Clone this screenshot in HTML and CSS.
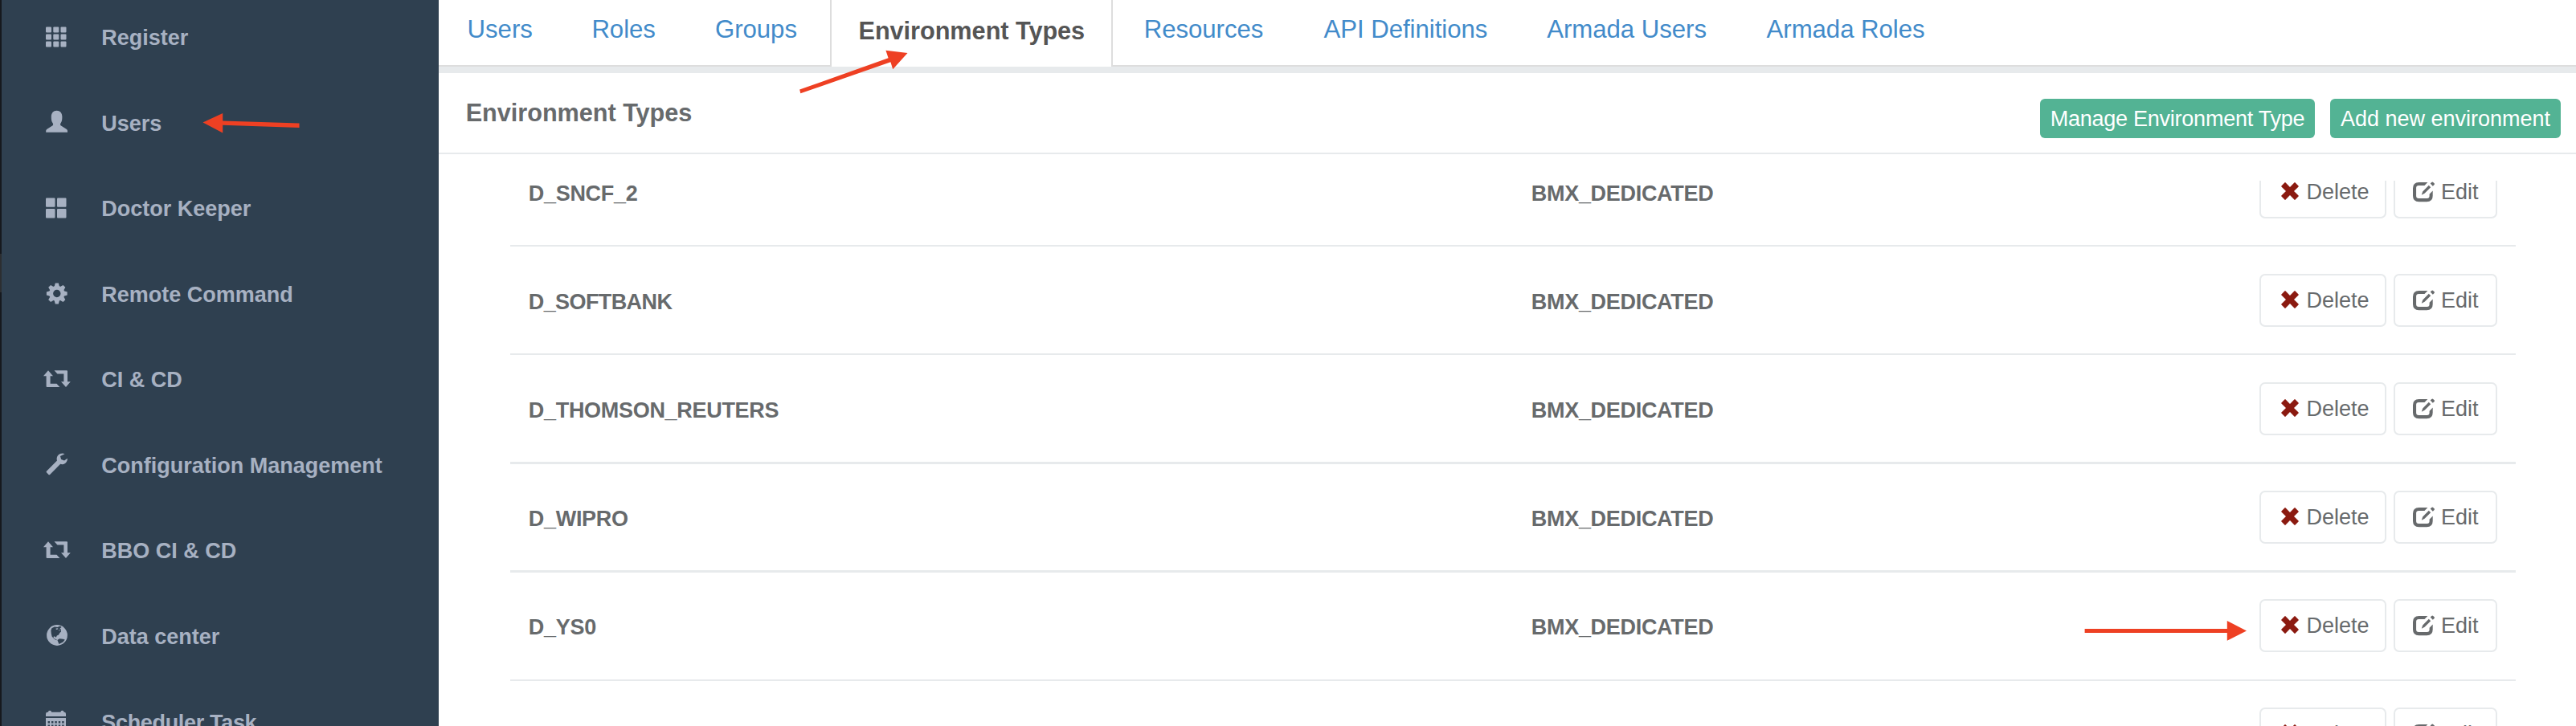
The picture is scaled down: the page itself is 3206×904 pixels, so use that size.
FILE: index.html
```html
<!DOCTYPE html>
<html lang="en">
<head>
<meta charset="utf-8">
<title>Environment Types</title>
<link rel="stylesheet" href="styles.css">
</head>
<body>
<svg class="defs" aria-hidden="true">
  <symbol id="i-retweet" viewBox="0 0 36 36"><path d="M7 6.3 13 13.2H9.6V22.8H17.5L21.4 27H5.6Q4.6 27 4.6 26V13.2H1ZM14.5 6.3H30Q31 6.3 31 7.3V20.2H34.8L29 27 23 20.2H26.4V10.6H18.4Z"/></symbol>
  <symbol id="i-remove" viewBox="0 0 22 22"><path d="M5.4.3 11 5.9 16.6.3Q17-.1 17.4.3L21.6 4.5Q22 5 21.6 5.5L16 11 21.6 16.5Q22 17 21.6 17.5L17.4 21.7Q17 22.1 16.6 21.7L11 16.1 5.4 21.7Q5 22.1 4.6 21.7L.4 17.5Q0 17 .4 16.5L6 11 .4 5.5Q0 5 .4 4.5L4.6.3Q5-.1 5.4.3Z"/></symbol>
  <symbol id="i-edit" viewBox="0 0 28 26"><path d="M18.4 1H7.5Q0 1 0 8.5V17.8Q0 25.3 7.5 25.3H17.2Q24.7 25.3 24.7 17.8V11.6L20.6 15.7V18Q20.6 21 17.6 21H7.2Q4.1 21 4.1 18V8Q4.1 5 7.2 5H14.5ZM19.8 4.8 22.2 7.2 14.6 14.8 10.8 16.8 12.2 12.6ZM21.7 2.6 23.3.9Q24.2 0 25.2.9L26.6 2.3Q27.4 3.1 26.6 4L24.8 5.7Z"/></symbol>
</svg>
<div class="app">
  <div class="edge"><span class="edge-mark"></span></div>
  <nav class="sidebar">
    <ul class="menu">
      <li><svg class="ico" viewBox="0 0 36 36"><g><rect x="4" y="4.4" width="7" height="7" rx="1"/><rect x="13.3" y="4.4" width="7" height="7" rx="1"/><rect x="22.5" y="4.4" width="7" height="7" rx="1"/><rect x="4" y="13.4" width="7" height="7" rx="1"/><rect x="13.3" y="13.4" width="7" height="7" rx="1"/><rect x="22.5" y="13.4" width="7" height="7" rx="1"/><rect x="4" y="22.4" width="7" height="7" rx="1"/><rect x="13.3" y="22.4" width="7" height="7" rx="1"/><rect x="22.5" y="22.4" width="7" height="7" rx="1"/></g></svg><span>Register</span></li>
      <li><svg class="ico" viewBox="0 0 36 36"><path d="M17.6 1.8C21.8 1.8 24.4 4.8 24.4 9.4 24.4 13 24 15 22.6 17.2 21.6 18.8 22 20 23.4 20.8L30 25Q31 25.8 31 27V28.8H4.2V27Q4.2 25.8 5.2 25L11.8 20.8C13.2 20 13.6 18.8 12.6 17.2 11.2 15 10.8 13 10.8 9.4 10.8 4.8 13.4 1.8 17.6 1.8Z"/></svg><span>Users</span></li>
      <li><svg class="ico" viewBox="0 0 36 36"><rect x="4" y="4.4" width="11.5" height="11.4" rx="1"/><rect x="18" y="4.4" width="11.5" height="11.4" rx="1"/><rect x="4" y="18" width="11.5" height="11.4" rx="1"/><rect x="18" y="18" width="11.5" height="11.4" rx="1"/></svg><span>Doctor Keeper</span></li>
      <li><svg class="ico" viewBox="0 0 36 36"><g transform="translate(17.8 16.5)"><circle r="7.2" fill="none" stroke="#a7b1c2" stroke-width="5"/><g id="teeth"><path d="M-3.2-8.6-2-12.9H2L3.2-8.6Z"/><path d="M-3.2-8.6-2-12.9H2L3.2-8.6Z" transform="rotate(45)"/><path d="M-3.2-8.6-2-12.9H2L3.2-8.6Z" transform="rotate(90)"/><path d="M-3.2-8.6-2-12.9H2L3.2-8.6Z" transform="rotate(135)"/></g><use href="#teeth" transform="rotate(180)"/></g></svg><span>Remote Command</span></li>
      <li><svg class="ico"><use href="#i-retweet"/></svg><span>CI &amp; CD</span></li>
      <li><svg class="ico" viewBox="0 0 36 36"><path d="M27.5 3.2Q25 1.8 21.8 3.1C18.4 4.6 17 8 18 11.6L4.9 24.8Q4.2 25.6 4.9 26.3L7.5 28.9Q8.3 29.7 9.1 28.9L22.2 15.8C25.3 16.9 28.4 15.6 30 12.8Q31.2 10.6 30.9 8.8L27 11.5 23.1 10.1 22 6.1Z"/></svg><span>Configuration Management</span></li>
      <li><svg class="ico"><use href="#i-retweet"/></svg><span>BBO CI &amp; CD</span></li>
      <li><svg class="ico" viewBox="0 0 36 36"><circle cx="18" cy="16" r="12.9"/><path class="land" d="M11.4 7.2 14.8 5.5 18.6 5.9 22 4.6 23.6 6 21.4 7.4 22.6 8.2 23 11.4 21.4 13 20 15.4 17.8 16.4 16.8 18.8 15.2 17.4 13.8 17.6 13.6 19.2 15.4 20.6 17.6 21.4 17.2 22.2 14.4 20.6 11.6 17.4 10.8 14 10.4 10ZM18.4 22 21 20.2 25.4 20.8 27.8 21.4 25.4 24.4 20.4 27 19.4 24.6Z"/><path d="M16.6 7.6 19.4 7.2 18.6 8.8 16.8 9ZM19.4 9.8 21.6 9.2 21.4 10.6Z"/></svg><span>Data center</span></li>
      <li><svg class="ico" viewBox="0 0 36 36"><path d="M4 10V7Q4 4.8 6.2 4.8H7V4.4Q7 2.8 9 2.8 11 2.8 11 4.4V4.8H22.5V4.4Q22.5 2.8 24.5 2.8 26.5 2.8 26.5 4.4V4.8H27Q29 4.8 29 7V10Z"/><path d="M4 12H29V30H4Z"/><path class="land" d="M6.6 16h2.4v2.6H6.6zM11 16h2.4v2.6H11zM15.4 16h2.4v2.6h-2.4zM19.8 16h2.4v2.6h-2.4zM24.2 16h2.4v2.6h-2.4zM6.6 20.6h2.4v2.6H6.6zM11 20.6h2.4v2.6H11zM15.4 20.6h2.4v2.6h-2.4zM19.8 20.6h2.4v2.6h-2.4zM24.2 20.6h2.4v2.6h-2.4z"/></svg><span class="tight">Scheduler Task</span></li>
    </ul>
  </nav>
  <main class="main">
    <div class="tabs">
      <a>Users</a><a>Roles</a><a>Groups</a><a class="active">Environment Types</a><a>Resources</a><a>API Definitions</a><a>Armada Users</a><a>Armada Roles</a>
    </div>
    <header class="head">
      <h1>Environment Types</h1>
      <div class="actions"><button class="green manage">Manage Environment Type</button><button class="green add">Add new environment</button></div>
    </header>
    <section class="rows">
      <div class="row"><b>D_SNCF_2</b><b>BMX_DEDICATED</b><div class="btns"><button class="btn del"><svg class="x"><use href="#i-remove"/></svg>Delete</button><button class="btn edit"><svg class="e"><use href="#i-edit"/></svg>Edit</button></div></div>
      <div class="row"><b class="softbank">D_SOFTBANK</b><b>BMX_DEDICATED</b><div class="btns"><button class="btn del"><svg class="x"><use href="#i-remove"/></svg>Delete</button><button class="btn edit"><svg class="e"><use href="#i-edit"/></svg>Edit</button></div></div>
      <div class="row thick tall"><b>D_THOMSON_REUTERS</b><b>BMX_DEDICATED</b><div class="btns"><button class="btn del"><svg class="x"><use href="#i-remove"/></svg>Delete</button><button class="btn edit"><svg class="e"><use href="#i-edit"/></svg>Edit</button></div></div>
      <div class="row thick low"><b>D_WIPRO</b><b>BMX_DEDICATED</b><div class="btns"><button class="btn del"><svg class="x"><use href="#i-remove"/></svg>Delete</button><button class="btn edit"><svg class="e"><use href="#i-edit"/></svg>Edit</button></div></div>
      <div class="row low"><b>D_YS0</b><b>BMX_DEDICATED</b><div class="btns"><button class="btn del"><svg class="x"><use href="#i-remove"/></svg>Delete</button><button class="btn edit"><svg class="e"><use href="#i-edit"/></svg>Edit</button></div></div>
      <div class="row low"><b></b><b></b><div class="btns"><button class="btn del"><svg class="x"><use href="#i-remove"/></svg>Delete</button><button class="btn edit"><svg class="e"><use href="#i-edit"/></svg>Edit</button></div></div>
    </section>
  </main>
</div>
<svg class="arrows" viewBox="0 0 3206 904">
  <path d="M252.5 152.4 277.2 141V150.6L372.5 153.6V159L277.2 155.8V165.5Z"/>
  <path d="M1129.5 66 1111.2 86.3 1108.4 77.3 996.3 116.3 995.2 111.6 1105.6 72.2 1102.4 62.7Z"/>
  <path d="M2796 785.4 2771.8 797.8V788H2594.6V783H2771.8V773Z"/>
</svg>
</body>
</html>
```
FILE: styles.css
```css
* { box-sizing: border-box; }
body { margin: 0; overflow: hidden; background: #fff; color: #676a6c; font-family: "Liberation Sans", Arial, sans-serif; font-size: 27px; }
.defs { display: none; }
.app { display: flex; width: 3206px; height: 904px; overflow: hidden; }

.edge { width: 2px; background: #16191e; padding-top: 316px; }
.edge-mark { display: block; height: 48px; background: #2c2e31; }
.sidebar { width: 544px; background: #2f4050; overflow: hidden; }
.menu { list-style: none; margin: -6.4px 0 0; padding: 0 0 0 51px; }
.menu li { display: flex; align-items: center; height: 106.6px; color: #a7b1c2; font-weight: bold; line-height: 30px; white-space: nowrap; }
.ico { width: 36px; height: 36px; margin-right: 37.3px; fill: #a7b1c2; flex: none; }
.land { fill: #2f4050; }
.tight { letter-spacing: -.33px; }

.main { flex: 1; min-width: 0; display: flex; flex-direction: column; }
.tabs { display: grid; grid-template-columns: 154.8px 153.6px 178.6px 355.1px 223.8px 277.8px 273.3px 1fr; height: 83px; border-bottom: 2px solid #ddd; flex: none; }
.tabs a { padding-left: 35.6px; font-size: 31.2px; line-height: 74px; letter-spacing: -.05px; color: #428bca; white-space: nowrap; }
.tabs .active { width: 352px; height: 83px; padding-left: 33.5px; background: #fff; border: solid #ddd; border-width: 0 2px; color: #555; font-size: 30.7px; font-weight: bold; line-height: 77px; }
.head { display: flex; justify-content: space-between; height: 109px; border-top: 8px solid #e7eaec; border-bottom: 2px solid #e7eaec; padding: 0 19px 0 33.7px; flex: none; }
h1 { margin: 0; font-size: 30.7px; line-height: 99px; letter-spacing: -.05px; }
.actions { display: flex; gap: 19px; padding-top: 32px; }
button { font: inherit; margin: 0; padding: 0; white-space: nowrap; }
.green { height: 49px; border: 0; border-radius: 6px; background: #53b394; color: #fff; line-height: 51px; }
.manage { width: 342px; letter-spacing: -.25px; }
.add { width: 287px; }

.rows { flex: 1; margin: 33px 75px 0 89px; overflow: hidden; }
.row { display: grid; grid-template-columns: 1248px 906.7px 1fr; align-items: start; height: 135px; padding: 34px 0 0 22.8px; border-bottom: 2px solid #e7eaec; }
.row:first-child { margin-top: -53px; }
.row b { line-height: 71px; letter-spacing: -.3px; }
.row .softbank { letter-spacing: -.6px; }
.tall { height: 136px; }
.thick { border-bottom-width: 3px; }
.low { padding-top: 33px; }
.btns { display: flex; gap: 9px; }
.btn { display: flex; align-items: center; height: 66px; border: 2px solid #e7eaec; border-radius: 7px; background: #fff; color: #676a6c; line-height: 64px; }
.del { width: 158px; padding-left: 24.5px; }
.edit { width: 129px; padding-left: 22px; }
.x { width: 22px; height: 22px; margin: -3px 9.6px 0 0; fill: #8b1a10; }
.e { width: 28px; height: 26px; margin: -1px 6.6px 0 0; fill: #676a6c; }
.arrows { position: absolute; left: 0; top: 0; width: 3206px; height: 904px; fill: #ee4023; pointer-events: none; }
```
